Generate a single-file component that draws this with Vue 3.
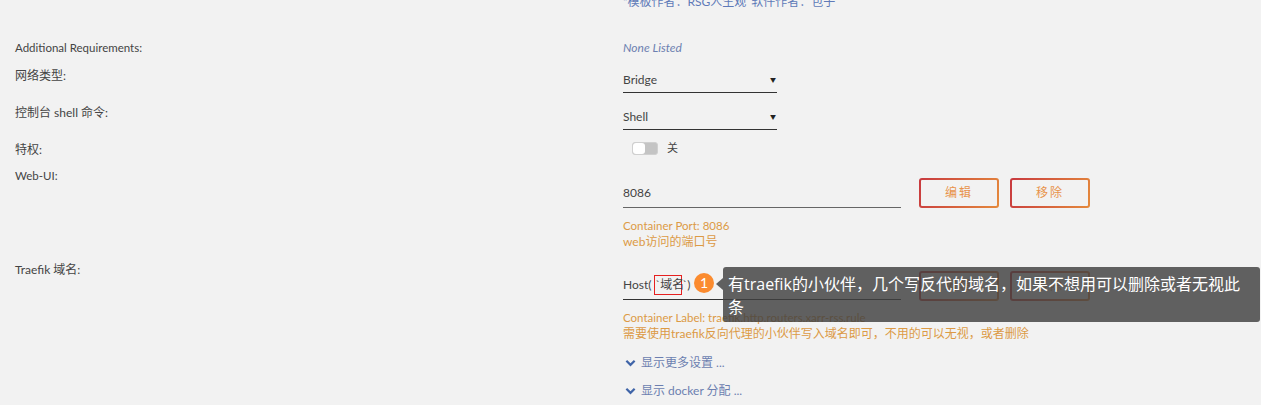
<script setup>
const cjk = '域名'
</script>

<template>
  <div class="page">
    <!-- 顶部被截断的作者信息 -->
    <div class="row author-row">
      <div class="label"></div>
      <div class="value author">“模板作者：RSG人生观 软件作者：包子</div>
    </div>

    <div class="row req-row">
      <div class="label en">Additional Requirements:</div>
      <div class="value none-listed">None Listed</div>
    </div>

    <div class="row net-row">
      <div class="label">网络类型:</div>
      <div class="value">
        <div class="select">
          <span>Bridge</span>
          <span class="caret">▼</span>
        </div>
      </div>
    </div>

    <div class="row shell-row">
      <div class="label">控制台 shell 命令:</div>
      <div class="value">
        <div class="select">
          <span>Shell</span>
          <span class="caret">▼</span>
        </div>
      </div>
    </div>

    <div class="row priv-row">
      <div class="label">特权:</div>
      <div class="value toggle-wrap">
        <span class="toggle"><span class="knob"></span></span>
        <span class="toggle-text">关</span>
      </div>
    </div>

    <div class="row web-row">
      <div class="label en">Web-UI:</div>
      <div class="value">
        <div class="input-line">
          <div class="input web-input">8086</div>
          <button class="btn">编辑</button>
          <button class="btn">移除</button>
        </div>
        <div class="hint en">Container Port: 8086</div>
        <div class="hint">web访问的端口号</div>
      </div>
    </div>

    <div class="row traefik-row">
      <div class="label">Traefik 域名:</div>
      <div class="value">
        <div class="input-line host-line">
          <div class="input host-input">Host(<span class="mark">`{{ cjk }}</span>`)</div>
          <button class="btn">编辑</button>
          <button class="btn">移除</button>
        </div>
        <div class="hint en">Container Label: traefik.http.routers.xarr-rss.rule</div>
        <div class="hint">需要使用traefik反向代理的小伙伴写入域名即可，不用的可以无视，或者删除</div>

        <div class="more more-first">
          <svg class="chevron" viewBox="0 0 12 8"><path d="M1.5 1.5 6 6l4.5-4.5" /></svg>
          显示更多设置 ...
        </div>
        <div class="more">
          <svg class="chevron" viewBox="0 0 12 8"><path d="M1.5 1.5 6 6l4.5-4.5" /></svg>
          显示 docker 分配 ...
        </div>

        <!-- 引导提示，盖在输入框和按钮上面 -->
        <span class="badge">1</span>
        <div class="tip">
          <span class="tip-arrow"></span>
          有traefik的小伙伴，几个写反代的域名，如果不想用可以删除或者无视此条
        </div>
      </div>
    </div>
  </div>
</template>

<style>
html,
body {
  margin: 0;
  background: #f2f2f2;
  overflow: hidden;
}
</style>

<style scoped>
.page {
  width: 1261px;
  height: 405px;
  overflow: hidden;
  background: #f2f2f2;
  color: #444;
  font-family: Lato, "Noto Sans CJK SC", sans-serif;
  font-size: 12px;
  line-height: 16px;
}

.row {
  display: grid;
  grid-template-columns: 608px 1fr;
  padding-left: 15px;
}

.value {
  position: relative;
}

/* 纯英文的行略小一点 */
.en {
  font-size: 11.5px;
}

/* 每一行的纵向位置 */
.author-row {
  height: 8px;
  margin-top: -6px;
}
.req-row {
  margin-top: 38px;
  height: 16px;
}
.net-row {
  margin-top: 12px;
  height: 37px;
}
.shell-row {
  height: 37px;
}
.priv-row {
  height: 26px;
}
.web-row {
  height: 94px;
}
.traefik-row {
  height: 150px;
}

.author {
  color: #5f7ab8;
  word-spacing: 2px;
  white-space: nowrap;
}

.none-listed {
  color: #6c7fb0;
  font-style: italic;
}

/* 下拉框 */
.select {
  width: 154px;
  height: 24px;
  border-bottom: 1px solid #333;
  display: flex;
  align-items: center;
  justify-content: space-between;
}
.caret {
  font-size: 6px;
  margin-right: 1px;
  color: #222;
}

/* 开关 */
.toggle-wrap {
  display: flex;
  align-items: center;
  height: 16px;
  padding-left: 9px;
  margin-top: -2px;
}
.toggle {
  width: 26px;
  height: 13px;
  background: #c4c4c4;
  border-radius: 3px;
  display: block;
  border: 1px solid #d0d0d0;
  box-sizing: border-box;
}
.knob {
  display: block;
  width: 12px;
  height: 11px;
  background: #fff;
  border-radius: 3px;
}
.toggle-text {
  margin-left: 9px;
  font-size: 11px;
}

/* 输入框 + 按钮 */
.input-line {
  display: flex;
  align-items: flex-start;
  gap: 11px;
  padding-top: 10px;
  height: 40px;
}
.host-line {
  padding-top: 9px;
  height: 39px;
}
.input {
  width: 278px;
  height: 29px;
  display: flex;
  align-items: center;
  border-bottom: 1px solid #666;
  margin-right: 7px;
}
.host-input {
  height: 28px;
  border-bottom-color: #333;
  white-space: pre;
}
.mark {
  display: inline-block;
  box-sizing: border-box;
  width: 28px;
  height: 20px;
  margin-left: 3px;
  border: 1px solid #e62020;
  line-height: 18px;
  white-space: nowrap;
}
.btn {
  width: 80px;
  height: 30px;
  padding: 0;
  border: 2px solid transparent;
  border-radius: 3px;
  background:
    linear-gradient(#f2f2f2, #f2f2f2) padding-box,
    linear-gradient(110deg, #c8393f, #e58a3c) border-box;
  color: #e8924a;
  font: inherit;
  letter-spacing: 2px;
}

.hint {
  color: #dc9a45;
  line-height: 16px;
}

.more {
  color: #6c7fb0;
  height: 28px;
  display: flex;
  align-items: center;
  gap: 5px;
  padding-left: 2px;
}
.more-first {
  margin-top: 7px;
}
.chevron {
  width: 11px;
  height: 8px;
  fill: none;
  stroke: #3f64a8;
  stroke-width: 2.4;
}

/* 引导提示 */
.badge {
  position: absolute;
  left: 71px;
  top: 11px;
  width: 20px;
  height: 20px;
  border-radius: 50%;
  background: #fb8b2f;
  color: #fff;
  font-size: 14px;
  line-height: 20px;
  text-align: center;
}
.tip {
  position: absolute;
  left: 100px;
  top: 5px;
  width: 537px;
  height: 55px;
  box-sizing: border-box;
  padding: 6px 12px 6px 5px;
  border-radius: 3px;
  background: rgba(64, 64, 64, 0.82);
  color: #fff;
  font-family: "Open Sans", "Noto Sans CJK SC", sans-serif;
  font-size: 16px;
  line-height: 23px;
}
.tip-arrow {
  position: absolute;
  left: -7px;
  top: 11px;
  border: 6px solid transparent;
  border-left: 0;
  border-right: 7px solid rgba(64, 64, 64, 0.82);
}
</style>
